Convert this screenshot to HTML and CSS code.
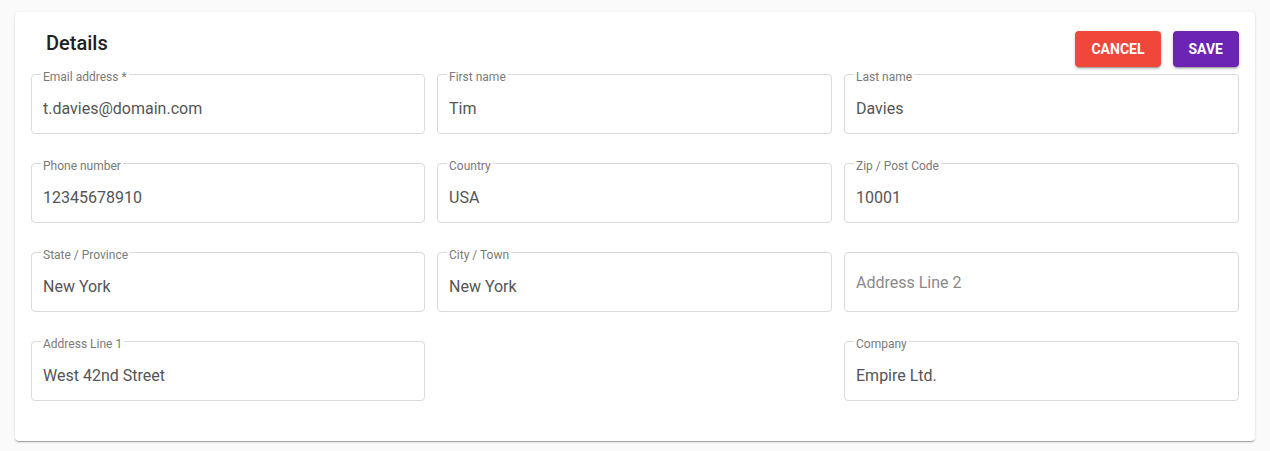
FILE: index.html
```html
<!DOCTYPE html>
<html>
<head>
	<meta charset="utf-8">
	<title>Details</title>
	<link rel="stylesheet" href="styles.css">
</head>
<body>

<div class="card">
	<div class="card-head">
		<h2 class="title">Details</h2>
		<div class="actions">
			<button class="btn btn-cancel">Cancel</button>
			<button class="btn btn-save">Save</button>
		</div>
	</div>

	<div class="form-grid">
		<div class="field">
			<label>Email address *</label>
			<input type="text" value="t.davies@domain.com">
		</div>
		<div class="field">
			<label>First name</label>
			<input type="text" value="Tim">
		</div>
		<div class="field">
			<label>Last name</label>
			<input type="text" value="Davies">
		</div>

		<div class="field">
			<label>Phone number</label>
			<input type="text" value="12345678910">
		</div>
		<div class="field">
			<label>Country</label>
			<input type="text" value="USA">
		</div>
		<div class="field">
			<label>Zip / Post Code</label>
			<input type="text" value="10001">
		</div>

		<div class="field">
			<label>State / Province</label>
			<input type="text" value="New York">
		</div>
		<div class="field">
			<label>City / Town</label>
			<input type="text" value="New York">
		</div>
		<div class="field field-empty">
			<input type="text" placeholder="Address Line 2">
		</div>

		<div class="field">
			<label>Address Line 1</label>
			<input type="text" value="West 42nd Street">
		</div>
		<div class="field field-last">
			<label>Company</label>
			<input type="text" value="Empire Ltd.">
		</div>
	</div>
</div>

</body>
</html>
```

FILE: styles.css
```css
*{
	margin: 0;
	padding: 0;
	box-sizing: border-box;
}

body{
	background-color: #fafafa;
	font-family: Roboto, "Liberation Sans", sans-serif;
	padding: 12px 15px;
}

.card{
	background-color: #fff;
	border-radius: 4px;
	padding: 19px 16px 40px;
	box-shadow: 0 2px 1px -1px rgba(0,0,0,.2), 0 1px 1px 0 rgba(0,0,0,.14), 0 1px 3px 0 rgba(0,0,0,.12);
}

.card-head{
	display: flex;
	justify-content: space-between;
	align-items: flex-start;
	margin-bottom: 7px;
}

.title{
	font-size: 20px;
	line-height: 24px;
	font-weight: 500;
	color: #212121;
	padding-left: 15px;
}

.actions{
	display: flex;
	gap: 12px;
}

.btn{
	height: 36px;
	padding: 0 16px;
	border: none;
	border-radius: 4px;
	color: #fff;
	font-family: Roboto, "Liberation Sans", sans-serif;
	font-size: 14px;
	font-weight: 700;
	letter-spacing: 0;
	text-transform: uppercase;
	box-shadow: 0 3px 1px -2px rgba(0,0,0,.2), 0 2px 2px 0 rgba(0,0,0,.14), 0 1px 5px 0 rgba(0,0,0,.12);
}

.btn-cancel{
	background-color: #f0473b;
}

.btn-save{
	background-color: #6c24b4;
}

.form-grid{
	display: grid;
	grid-template-columns: 394px 1fr 1fr;
	column-gap: 12px;
	row-gap: 29px;
}

.field{
	position: relative;
	height: 60px;
	border: 1px solid #dadada;
	border-radius: 4px;
}

/* label sits on top of the border line */
.field label{
	position: absolute;
	top: -5px;
	left: 9px;
	padding: 0 2px;
	background-color: #fff;
	font-size: 12px;
	line-height: 14px;
	color: #7a7a7a;
}

.field input{
	display: block;
	width: 100%;
	height: 58px;
	padding: 24px 11px 15px;
	border: none;
	outline: none;
	background: transparent;
	font-family: Roboto, "Liberation Sans", sans-serif;
	font-size: 16px;
	line-height: 19px;
	color: #555;
}

.field-empty input{
	padding: 20px 11px 19px;
}

.field-empty input::placeholder{
	color: #8a8a8a;
	opacity: 1;
}

.field-last{
	grid-column: 3;
}
```
